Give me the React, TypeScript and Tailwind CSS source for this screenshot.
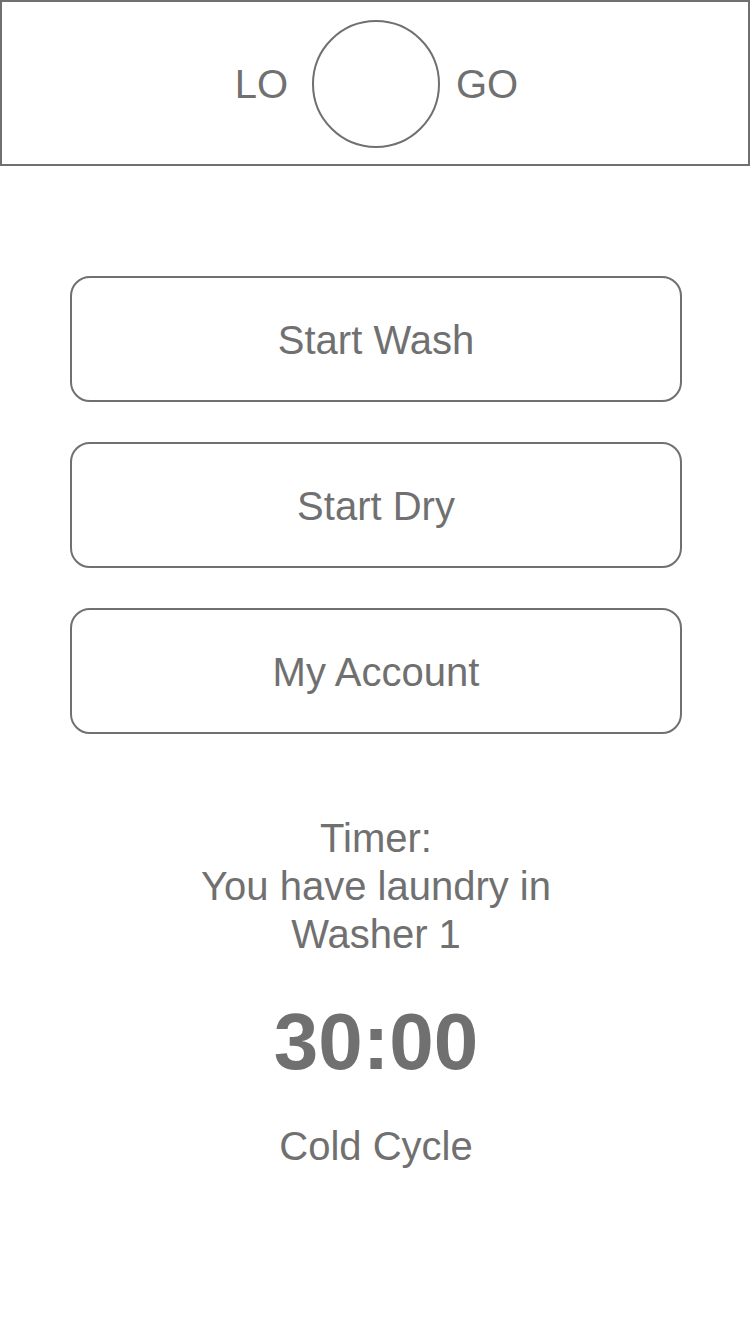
import React from "react";

interface MenuButtonProps {
  label: string;
}

const MenuButton: React.FC<MenuButtonProps> = ({ label }) => (
  <button
    type="button"
    className="w-full h-[126px] rounded-[20px] border-2 border-[#707070] bg-white pt-0.5 text-[40px] leading-12"
  >
    {label}
  </button>
);

interface TimerProps {
  machine: string;
  remaining: string;
  cycle: string;
}

const Timer: React.FC<TimerProps> = ({ machine, remaining, cycle }) => (
  <section className="flex flex-col items-center text-center text-[40px] leading-12">
    <h2>Timer:</h2>
    <p>
      You have laundry in
      <br />
      {machine}
    </p>
    <p className="mt-9 text-[80px] leading-24 font-bold">{remaining}</p>
    <p className="mt-8">{cycle}</p>
  </section>
);

const menuItems = ["Start Wash", "Start Dry", "My Account"];

export default function App() {
  return (
    <div className="min-h-screen bg-white text-[#707070] font-['Liberation_Sans',Arial,sans-serif]">
      {/* Logo placeholder */}
      <header className="grid grid-cols-[1fr_auto_1fr] items-center border-2 border-[#707070] pl-4 pr-[14px] pt-[18px] pb-4 text-[40px] leading-12">
        <span className="pr-6 text-right">LO</span>
        <div className="size-32 rounded-full border-2 border-[#707070]" />
        <span className="pl-4">GO</span>
      </header>

      <main className="pl-[70px] pr-[68px] pt-[110px] pb-12">
        <nav className="flex flex-col gap-10">
          {menuItems.map((label) => (
            <MenuButton key={label} label={label} />
          ))}
        </nav>

        <div className="mt-20">
          <Timer machine="Washer 1" remaining="30:00" cycle="Cold Cycle" />
        </div>
      </main>
    </div>
  );
}
